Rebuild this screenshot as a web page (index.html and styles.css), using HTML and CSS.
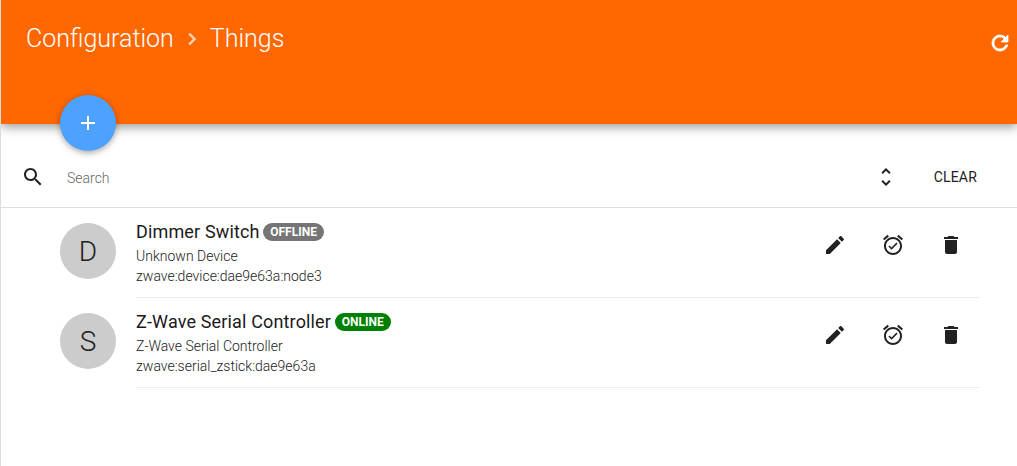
FILE: index.html
```html
<!DOCTYPE html>
<html lang="en">
<head>
    <meta charset="UTF-8">
    <meta name="viewport" content="width=device-width, initial-scale=1.0">
    <title>Things - Configuration</title>
    <link rel="stylesheet" href="styles.css">
</head>
<body>

    <!-- Header -->
    <div class="header">
        <div class="breadcrumb">
            <span>Configuration</span>
            <svg class="crumb-sep" viewBox="0 0 24 24"><path d="M10 6L8.59 7.41 13.17 12l-4.58 4.59L10 18l6-6z"/></svg>
            <span>Things</span>
        </div>
        <svg class="refresh" viewBox="0 0 24 24"><path d="M17.65 6.35C16.2 4.9 14.21 4 12 4c-4.42 0-7.99 3.58-7.99 8s3.57 8 7.99 8c3.73 0 6.84-2.55 7.73-6h-2.08c-.82 2.33-3.04 4-5.65 4-3.31 0-6-2.69-6-6s2.69-6 6-6c1.66 0 3.14.69 4.22 1.78L13 11h7V4l-2.35 2.35z"/></svg>
    </div>

    <!-- Add button -->
    <div class="fab">
        <svg viewBox="0 0 24 24"><path d="M19 13h-6v6h-2v-6H5v-2h6V5h2v6h6v2z"/></svg>
    </div>

    <!-- Search bar -->
    <div class="searchbar">
        <svg class="icon" viewBox="0 0 24 24"><path d="M15.5 14h-.79l-.28-.27C15.41 12.59 16 11.11 16 9.5 16 5.91 13.09 3 9.5 3S3 5.91 3 9.5 5.91 16 9.5 16c1.61 0 3.09-.59 4.23-1.57l.27.28v.79l5 4.99L20.49 19l-4.99-5zm-6 0C7.01 14 5 11.99 5 9.5S7.01 5 9.5 5 14 7.01 14 9.5 11.99 14 9.5 14z"/></svg>
        <div class="search-label">Search</div>
        <svg class="icon" viewBox="0 0 24 24"><path d="M12 5.83L15.17 9l1.41-1.41L12 3 7.41 7.59 8.83 9 12 5.83zm0 12.34L8.83 15l-1.41 1.41L12 21l4.59-4.59L15.17 15 12 18.17z"/></svg>
        <div class="clear">CLEAR</div>
    </div>

    <!-- Things -->
    <div class="thing-list">
        <div class="thing">
            <div class="avatar">D</div>
            <div class="thing-body">
                <div class="thing-info">
                    <div class="thing-title">Dimmer Switch <span class="badge offline">OFFLINE</span></div>
                    <div class="thing-line">Unknown Device</div>
                    <div class="thing-line">zwave:device:dae9e63a:node3</div>
                </div>
                <div class="actions">
                    <svg class="icon" viewBox="0 0 24 24"><path d="M3 17.25V21h3.75L17.81 9.94l-3.75-3.75L3 17.25zM20.71 7.04c.39-.39.39-1.02 0-1.41l-2.34-2.34c-.39-.39-1.02-.39-1.41 0l-1.83 1.83 3.75 3.75 1.83-1.83z"/></svg>
                    <svg class="icon" viewBox="0 0 24 24"><path d="M22 5.72l-4.6-3.86-1.29 1.53 4.6 3.86L22 5.72zM7.88 3.39L6.6 1.86 2 5.71l1.29 1.53 4.59-3.85zM12 4c-4.97 0-9 4.03-9 9s4.03 9 9 9 9-4.03 9-9-4.03-9-9-9zm0 16c-3.86 0-7-3.14-7-7s3.14-7 7-7 7 3.14 7 7-3.13 7-7 7zm-1.46-5.47L8.41 12.4l-1.06 1.06 3.18 3.18 6-6-1.06-1.06-4.93 4.95z"/></svg>
                    <svg class="icon" viewBox="0 0 24 24"><path d="M6 19c0 1.1.9 2 2 2h8c1.1 0 2-.9 2-2V7H6v12zM19 4h-3.5l-1-1h-5l-1 1H5v2h14V4z"/></svg>
                </div>
            </div>
        </div>
        <div class="thing">
            <div class="avatar">S</div>
            <div class="thing-body">
                <div class="thing-info">
                    <div class="thing-title">Z-Wave Serial Controller <span class="badge online">ONLINE</span></div>
                    <div class="thing-line">Z-Wave Serial Controller</div>
                    <div class="thing-line">zwave:serial_zstick:dae9e63a</div>
                </div>
                <div class="actions">
                    <svg class="icon" viewBox="0 0 24 24"><path d="M3 17.25V21h3.75L17.81 9.94l-3.75-3.75L3 17.25zM20.71 7.04c.39-.39.39-1.02 0-1.41l-2.34-2.34c-.39-.39-1.02-.39-1.41 0l-1.83 1.83 3.75 3.75 1.83-1.83z"/></svg>
                    <svg class="icon" viewBox="0 0 24 24"><path d="M22 5.72l-4.6-3.86-1.29 1.53 4.6 3.86L22 5.72zM7.88 3.39L6.6 1.86 2 5.71l1.29 1.53 4.59-3.85zM12 4c-4.97 0-9 4.03-9 9s4.03 9 9 9 9-4.03 9-9-4.03-9-9-9zm0 16c-3.86 0-7-3.14-7-7s3.14-7 7-7 7 3.14 7 7-3.13 7-7 7zm-1.46-5.47L8.41 12.4l-1.06 1.06 3.18 3.18 6-6-1.06-1.06-4.93 4.95z"/></svg>
                    <svg class="icon" viewBox="0 0 24 24"><path d="M6 19c0 1.1.9 2 2 2h8c1.1 0 2-.9 2-2V7H6v12zM19 4h-3.5l-1-1h-5l-1 1H5v2h14V4z"/></svg>
                </div>
            </div>
        </div>
    </div>

</body>
</html>
```

FILE: styles.css
```css
html, body {
    height: 100%;
}

body {
    font-family: Roboto, "Liberation Sans", sans-serif;
    margin: 0;
    border-left: 1px solid #ddd;
    background-color: #fff;
    color: #212121;
    overflow: hidden;
    position: relative;
}

.icon {
    width: 24px;
    height: 24px;
    flex-shrink: 0;
    fill: #212121;
}

/* Header */
.header {
    height: 124px;
    background-color: #ff6700;
    box-shadow: 0 3px 10px rgba(0,0,0,0.4);
    display: flex;
    justify-content: space-between;
    align-items: flex-start;
    padding: 0 5px 0 25px;
    position: relative;
}

.breadcrumb {
    display: flex;
    align-items: center;
    gap: 6px;
    color: #fff;
    font-size: 25px;
    font-weight: 300;
    line-height: 30px;
    margin-top: 24px;
}

.crumb-sep {
    width: 24px;
    height: 24px;
    fill: rgba(255,255,255,0.7);
    stroke: rgba(255,255,255,0.7);
    stroke-width: 0.4;
}

.refresh {
    width: 24px;
    height: 24px;
    fill: #fff;
    stroke: #fff;
    stroke-width: 0.8;
    margin-top: 31px;
}

/* Add button */
.fab {
    position: absolute;
    left: 59px;
    top: 95px;
    width: 56px;
    height: 56px;
    border-radius: 50%;
    background-color: #4da2ff;
    box-shadow: 0 2px 6px rgba(0,0,0,0.35);
    display: flex;
    align-items: center;
    justify-content: center;
}

.fab svg {
    width: 24px;
    height: 24px;
    fill: #fff;
}

/* Search bar */
.searchbar {
    height: 60px;
    border-bottom: 1px solid #ddd;
    display: flex;
    align-items: center;
    padding: 23px 40px 0 20px;
}

.search-label {
    flex-grow: 1;
    margin-left: 22px;
    padding-top: 1px;
    font-size: 14px;
    font-weight: 300;
    color: #666;
}

.clear {
    margin-left: 36px;
    font-size: 14px;
    letter-spacing: 0.2px;
    color: #212121;
}

/* Thing rows */
.thing {
    display: flex;
    padding-left: 59px;
    padding-right: 37px;
}

.avatar {
    width: 56px;
    height: 56px;
    margin-top: 15px;
    border-radius: 50%;
    background-color: #ccc;
    display: flex;
    align-items: center;
    justify-content: center;
    font-size: 28px;
    font-weight: 300;
    flex-shrink: 0;
}

.thing-body {
    flex-grow: 1;
    margin-left: 20px;
    height: 89px;
    border-bottom: 1px solid #eee;
    display: flex;
    justify-content: space-between;
}

.thing-info {
    padding-top: 13px;
}

.thing-title {
    font-size: 18px;
    letter-spacing: 0.15px;
    line-height: 22px;
    height: 22px;
    margin-bottom: 3px;
    color: #1a1a1a;
}

.badge {
    display: inline-block;
    margin-left: -1px;
    font-size: 12px;
    font-weight: 700;
    letter-spacing: 0;
    line-height: 18px;
    padding: 0 7px;
    border-radius: 9px;
    color: #fff;
    vertical-align: 2px;
}

.badge.offline {
    background-color: #757575;
}

.badge.online {
    background-color: #008000;
}

.thing-line {
    font-size: 14px;
    font-weight: 300;
    line-height: 20px;
}

.actions {
    display: flex;
    gap: 34px;
    padding: 25px 17px 0 0;
}
```
